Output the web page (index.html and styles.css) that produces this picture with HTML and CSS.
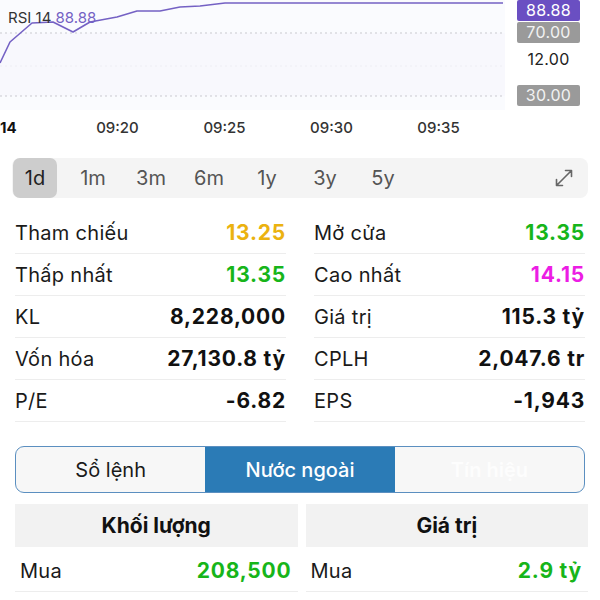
FILE: index.html
```html
<!DOCTYPE html>
<html lang="vi">
<head>
  <meta charset="UTF-8">
  <meta name="viewport" content="width=device-width, initial-scale=1.0">
  <title>Chi tiết mã</title>
  <link rel="stylesheet" href="styles.css">
</head>
<body>
  <div class="chart">
    <div class="plot">
      <svg width="505" height="110" viewBox="0 0 505 110">
        <rect x="0" y="0" width="505" height="110" fill="#fafbfe"/>
        <rect x="0" y="33" width="505" height="63" fill="#f8f8fd"/>
        <line x1="0" y1="66" x2="505" y2="66" stroke="#eeeef4" stroke-width="1" stroke-dasharray="2 3"/>
        <line x1="0" y1="33" x2="505" y2="33" stroke="#c9c9cf" stroke-width="1" stroke-dasharray="2 3"/>
        <line x1="0" y1="96" x2="505" y2="96" stroke="#c9c9cf" stroke-width="1" stroke-dasharray="2 3"/>
        <polyline fill="none" stroke="#7461c4" stroke-width="1.6" stroke-linejoin="round"
          points="0,63 10,42 32,23 53,22 73,32 90,22 117,17 137,11 160,11 180,7 200,6 225,3 503,3"/>
      </svg>
      <div class="legend">RSI 14 <span class="legend-value">88.88</span></div>
    </div>
    <div class="axis">
      <span class="tag tag-purple">88.88</span>
      <span class="tag tag-gray">70.00</span>
      <span class="tag-plain">12.00</span>
      <span class="tag tag-gray tag-low">30.00</span>
    </div>
  </div>

  <div class="times">
    <span class="time time-first">14</span>
    <span class="time">09:20</span>
    <span class="time">09:25</span>
    <span class="time">09:30</span>
    <span class="time">09:35</span>
  </div>

  <div class="periods">
    <span class="period active">1d</span>
    <span class="period">1m</span>
    <span class="period">3m</span>
    <span class="period">6m</span>
    <span class="period">1y</span>
    <span class="period">3y</span>
    <span class="period">5y</span>
    <svg class="expand" width="22" height="22" viewBox="0 0 22 22">
      <path d="M3.5 18.5 L18.5 3.5 M12.5 3.5 H18.5 V9.5 M3.5 12.5 V18.5 H9.5" fill="none" stroke="#666" stroke-width="1.6" stroke-linecap="round" stroke-linejoin="round"/>
    </svg>
  </div>

  <div class="stats">
    <div class="stat"><span class="label">Tham chiếu</span><span class="value yellow">13.25</span></div>
    <div class="stat"><span class="label">Mở cửa</span><span class="value green">13.35</span></div>
    <div class="stat"><span class="label">Thấp nhất</span><span class="value green">13.35</span></div>
    <div class="stat"><span class="label">Cao nhất</span><span class="value pink">14.15</span></div>
    <div class="stat"><span class="label">KL</span><span class="value">8,228,000</span></div>
    <div class="stat"><span class="label">Giá trị</span><span class="value">115.3 tỷ</span></div>
    <div class="stat"><span class="label">Vốn hóa</span><span class="value">27,130.8 tỷ</span></div>
    <div class="stat"><span class="label">CPLH</span><span class="value">2,047.6 tr</span></div>
    <div class="stat"><span class="label">P/E</span><span class="value">-6.82</span></div>
    <div class="stat"><span class="label">EPS</span><span class="value">-1,943</span></div>
  </div>

  <div class="segments">
    <span class="segment">Sổ lệnh</span>
    <span class="segment selected">Nước ngoài</span>
    <span class="segment faded">Tín hiệu</span>
  </div>

  <div class="foreign">
    <div class="foreign-col">
      <div class="foreign-head">Khối lượng</div>
      <div class="foreign-row"><span class="label">Mua</span><span class="value green">208,500</span></div>
    </div>
    <div class="foreign-col">
      <div class="foreign-head">Giá trị</div>
      <div class="foreign-row"><span class="label">Mua</span><span class="value green">2.9 tỷ</span></div>
    </div>
  </div>
</body>
</html>
```

FILE: styles.css
```css
body {
  margin: 0;
  font-family: Inter, "Noto Sans", sans-serif;
  background: #fff;
  color: #1a1a1a;
  width: 600px;
  overflow: hidden;
}
.chart {
  display: flex;
  height: 110px;
}
.plot {
  position: relative;
  width: 505px;
}
.plot svg {
  display: block;
}
.legend {
  position: absolute;
  left: 8px;
  top: 8px;
  font-size: 15px;
  color: #333;
}
.legend-value {
  color: #7461c4;
}
.axis {
  width: 95px;
  display: flex;
  flex-direction: column;
  align-items: flex-start;
  padding-left: 12px;
  box-sizing: border-box;
}
.tag {
  width: 63px;
  height: 21px;
  line-height: 21px;
  text-align: center;
  font-size: 16px;
  border-radius: 2px;
  letter-spacing: 0.3px;
}
.tag-purple {
  background: #6a4fc2;
  color: #fff;
}
.tag-gray {
  background: #9a9a9a;
  color: #f2f2f2;
  margin-top: 1px;
}
.tag-plain {
  width: 63px;
  text-align: center;
  font-size: 16px;
  line-height: 20px;
  margin-top: 6px;
  color: #222;
  letter-spacing: 0.3px;
}
.tag-low {
  margin-top: 16px;
}
.times {
  display: flex;
  height: 36px;
  line-height: 36px;
  font-size: 15px;
  font-weight: 500;
  color: #333;
}
.time {
  width: 107px;
  text-align: center;
}
.time-first {
  width: 64px;
  text-align: left;
  font-weight: 700;
  color: #111;
}
.periods {
  display: flex;
  align-items: center;
  gap: 14px;
  margin: 12px 12px 0;
  height: 40px;
  background: #f4f4f4;
  border-radius: 8px;
  padding-left: 1px;
}
.period {
  width: 44px;
  height: 40px;
  line-height: 40px;
  text-align: center;
  font-size: 20px;
  color: #555;
  border-radius: 7px;
}
.period.active {
  background: #cdcdcd;
  color: #222;
}
.expand {
  margin-left: auto;
  margin-right: 13px;
}
.stats {
  display: grid;
  grid-template-columns: 271px 271px;
  column-gap: 28px;
  padding: 14px 15px 0;
}
.stat {
  display: flex;
  justify-content: space-between;
  align-items: center;
  height: 41px;
  border-bottom: 1px solid #ededed;
}
.label {
  font-size: 20px;
  letter-spacing: 0.3px;
}
.value {
  font-size: 21px;
  font-weight: 700;
  color: #111;
  letter-spacing: 0.8px;
}
.yellow {
  color: #ebb210;
}
.green {
  color: #17b51a;
}
.pink {
  color: #ec1de4;
}
.segments {
  display: flex;
  margin: 24px 15px 0;
  height: 47px;
  box-sizing: border-box;
  border: 1.5px solid #5b8fc0;
  border-radius: 9px;
  overflow: hidden;
  background: #f7f7f7;
}
.segment {
  flex: 1;
  display: flex;
  align-items: center;
  justify-content: center;
  font-size: 20px;
  color: #1a1a1a;
}
.segment.selected {
  background: #2b7bb6;
  color: #fff;
  font-weight: 500;
}
.segment.faded {
  color: #fdfdfd;
  font-weight: 600;
}
.foreign {
  display: flex;
  gap: 8px;
  margin: 11px 12px 0 15px;
}
.foreign-col {
  flex: 1;
}
.foreign-head {
  height: 43px;
  line-height: 43px;
  text-align: center;
  background: #f2f2f2;
  font-size: 21px;
  font-weight: 700;
  color: #111;
}
.foreign-row {
  display: flex;
  justify-content: space-between;
  align-items: center;
  height: 45px;
  padding: 3px 6px 0 5px;
  box-sizing: border-box;
  border-bottom: 1px solid #ededed;
}
```
